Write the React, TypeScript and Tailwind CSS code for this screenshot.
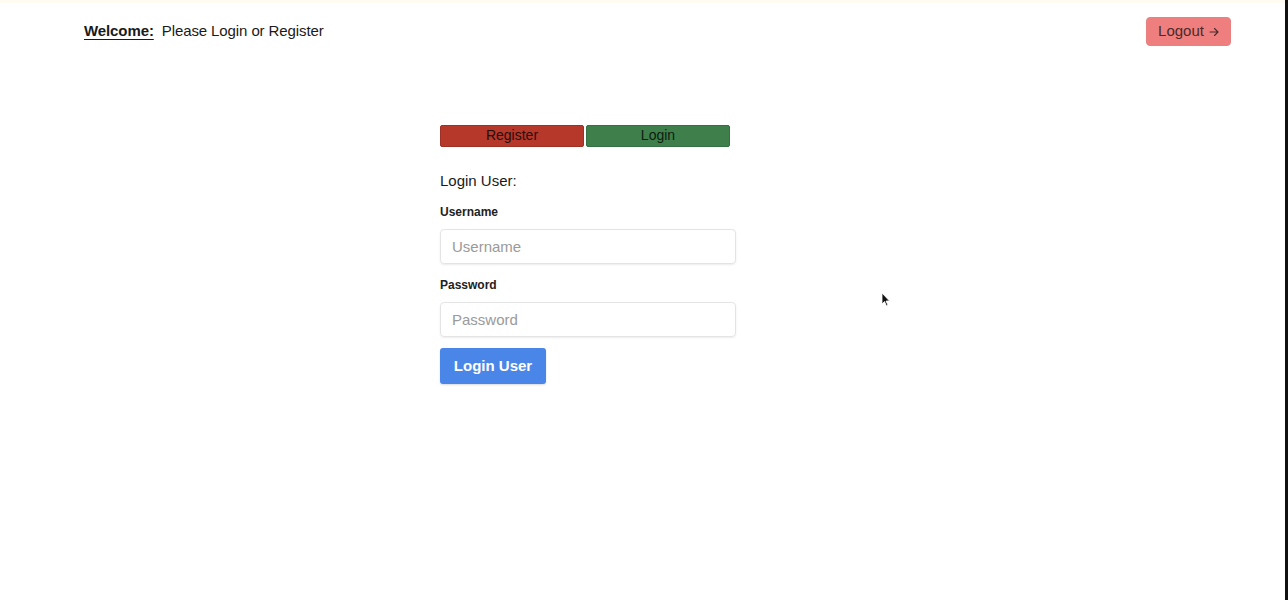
import { useState } from 'react';

// Simple auth screen: header with welcome text + logout, tabbed register/login form
export default function App() {
  const [tab, setTab] = useState<'register' | 'login'>('login');

  return (
    <div className="flex h-[600px] w-full bg-white font-['Liberation_Sans',Arial,sans-serif] text-[#1a1a1a]">
      <div className="relative flex flex-1 flex-col">
        <div className="h-[3px] w-full bg-[#fffbf3]" />
        <header className="flex items-center justify-between pl-[84px] pr-[54px] pt-[14px]">
          <div className="flex items-center gap-[8px] text-[15px] tracking-[-0.1px]">
            <span className="font-bold underline underline-offset-[3px]">Welcome:</span>
            <span>Please Login or Register</span>
          </div>
          <button className="flex h-[29px] w-[85px] items-center justify-center gap-[5px] rounded-[4px] border border-[#e88080] bg-[#ef7f7f] text-[15px] text-[#4a2a2a]">
            Logout
            <svg width="10" height="10" viewBox="0 0 10 10" fill="none" stroke="#4a2a2a" strokeWidth="1.1" strokeLinecap="round" strokeLinejoin="round">
              <path d="M1 5 H9 M5.5 1.5 L9 5 L5.5 8.5" />
            </svg>
          </button>
        </header>

        <main className="flex flex-col pl-[440px] pt-[79px]">
          <div className="flex w-[290px] gap-[2px]">
            <button
              onClick={() => setTab('register')}
              className="flex h-[22px] flex-1 items-center justify-center rounded-[2px] border border-[#9e3025] bg-[#b5382b] pb-[2px] text-[14px] leading-[16px] text-[#2a0d0a]"
            >
              Register
            </button>
            <button
              onClick={() => setTab('login')}
              className="flex h-[22px] flex-1 items-center justify-center rounded-[2px] border border-[#357042] bg-[#3f7f4b] pb-[2px] text-[14px] leading-[16px] text-[#0d200f]"
            >
              Login
            </button>
          </div>

          <p className="mt-[25px] text-[15px] leading-[18px]">{tab === 'login' ? 'Login User:' : 'Register User:'}</p>

          <label className="mt-[15px] text-[12px] font-bold leading-[14px] text-[#222]">Username</label>
          <input
            placeholder="Username"
            className="mt-[10px] h-[35px] w-[296px] rounded-[4px] border border-[#e4e4e4] px-[11px] text-[15px] shadow-[0_1px_2px_rgba(0,0,0,0.08)] outline-none placeholder:text-[#9a9a9a]"
          />

          <label className="mt-[14px] text-[12px] font-bold leading-[14px] text-[#222]">Password</label>
          <input
            type="password"
            placeholder="Password"
            className="mt-[10px] h-[35px] w-[296px] rounded-[4px] border border-[#e4e4e4] px-[11px] text-[15px] shadow-[0_1px_2px_rgba(0,0,0,0.08)] outline-none placeholder:text-[#9a9a9a]"
          />

          <button className="mt-[11px] h-[36px] w-[106px] rounded-[3px] bg-[#4a86e8] text-[15px] font-bold text-white shadow-[0_1px_2px_rgba(0,0,0,0.15)]">
            {tab === 'login' ? 'Login User' : 'Register'}
          </button>
        </main>

        {/* mouse pointer captured in screenshot */}
        <svg className="absolute left-[881px] top-[292px]" width="10" height="16" viewBox="0 0 10 16">
          <path d="M1 1 L1 12 L3.5 9.5 L5.5 14 L7 13.3 L5 9 L8.5 9 Z" fill="#111" stroke="#fff" strokeWidth="0.8" />
        </svg>
      </div>
      <div className="w-[3px] bg-[#111]" />
    </div>
  );
}
